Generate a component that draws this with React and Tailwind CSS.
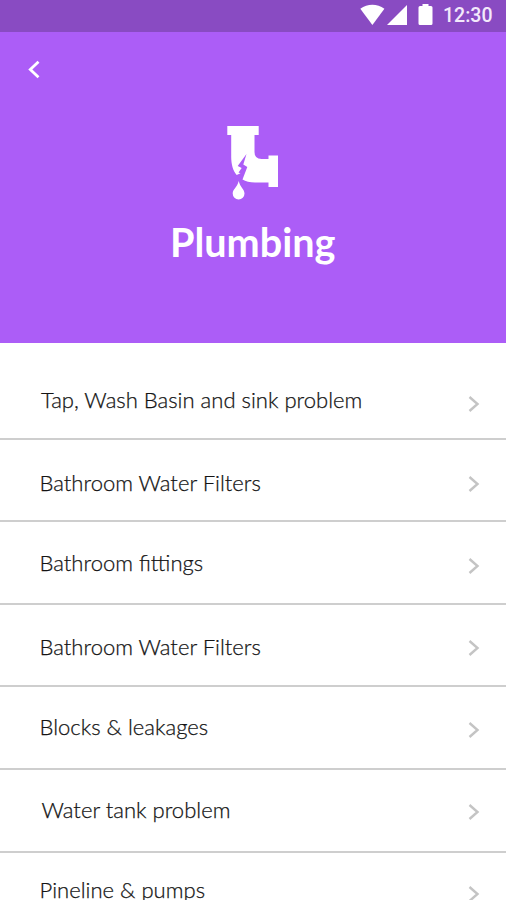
const services = [
  { label: "Tap, Wash Basin and sink problem", row: "h-[97px]", text: "mt-[44px] ml-[41px]", arrow: "mt-[53px]" },
  { label: "Bathroom Water Filters", row: "h-[82px]", text: "mt-[30px] ml-[39.5px]", arrow: "mt-[36px]" },
  { label: "Bathroom fittings", row: "h-[83px]", text: "mt-[28px] ml-[39.5px]", arrow: "mt-[36px]" },
  { label: "Bathroom Water Filters", row: "h-[82px]", text: "mt-[29px] ml-[39.5px]", arrow: "mt-[35px]" },
  { label: "Blocks & leakages", row: "h-[83px]", text: "mt-[27px] ml-[39.5px]", arrow: "mt-[35px]" },
  { label: "Water tank problem", row: "h-[83px]", text: "mt-[27px] ml-[41.5px]", arrow: "mt-[34px]" },
  { label: "Pineline & pumps", row: "h-[83px]", text: "mt-[24px] ml-[39.5px]", arrow: "mt-[33px]" },
]

function StatusBar() {
  return (
    <div className="flex h-8 items-start bg-[#894bc2] pr-[14px] text-white">
      <svg className="mt-1 ml-auto" width="26" height="22" viewBox="0 0 26 22" fill="currentColor">
        <path d="M0.3 4.8C7.5-0.7 17.2-0.7 24.4 4.8L12.4 21Z" />
      </svg>
      <svg className="mt-[5px] ml-px" width="21" height="21" viewBox="0 0 21 21" fill="currentColor">
        <path d="M20 0V20H0Z" />
      </svg>
      <svg className="mt-1 ml-[10px]" width="15" height="22" viewBox="0 0 15 22" fill="currentColor">
        <path d="M4.5 0H10.5V2H13Q14.5 2 14.5 3.5V19.5Q14.5 21 13 21H2Q0.5 21 0.5 19.5V3.5Q0.5 2 2 2H4.5Z" />
      </svg>
      <span className="mt-[4px] ml-[10px] w-[49px] whitespace-nowrap font-['Roboto',sans-serif] text-[19.5px] leading-6 font-medium text-[#f3e9fb]">
        12:30
      </span>
    </div>
  )
}

function PipeIcon() {
  return (
    <svg width="52" height="75" viewBox="0 0 52 75" fill="white">
      <path d="M0.3 0H31.7V9H27.5V26Q27.5 33 34.5 33H41.5V29.5H51V61H41.5V56.5H28C23 56.5 18.5 55.5 15.5 53.5L20.3 41L16.3 38.5L19.5 28L10.7 40L14.7 42L11.5 46.5L13.5 47.3L9.7 49C6 45 4.2 38 4.2 31V9H0.3Z" />
      <path d="M11.7 55C13 61 17.5 63.3 17.5 67.5A5.9 5.9 0 0 1 5.7 67.5C5.7 63.3 10.4 61 11.7 55Z" />
    </svg>
  )
}

function App() {
  return (
    <div className="h-[900px] w-[506px] overflow-hidden bg-white font-['Lato',sans-serif]">
      <StatusBar />

      <header className="flex h-[311px] flex-col bg-[#ac5df7]">
        <button className="mt-7 ml-7 h-[19px] w-3" aria-label="Back">
          <svg width="12" height="19" viewBox="0 0 12 19" fill="none" stroke="white" strokeWidth="2.8">
            <path d="M10.5 1.8L2.3 9.5L10.5 17.2" />
          </svg>
        </button>
        <div className="mt-[47px] ml-[227px]">
          <PipeIcon />
        </div>
        <h1 className="mt-4 ml-[170px] text-[39.6px] leading-[50px] font-bold text-white">Plumbing</h1>
      </header>

      <ul>
        {services.map((service, i) => (
          <li key={i} className={`flex items-start border-b-2 border-[#cecece] pr-[26px] ${service.row}`}>
            <span
              className={`text-[22.05px] leading-[26px] font-light whitespace-nowrap text-[#141414] [-webkit-text-stroke:0.25px_#141414] ${service.text}`}
            >
              {service.label}
            </span>
            <svg
              className={`ml-auto ${service.arrow}`}
              width="12"
              height="16"
              viewBox="0 0 12 16"
              fill="none"
              stroke="#c4c4c4"
              strokeWidth="2.4"
            >
              <path d="M1.5 1L9.5 8L1.5 15" />
            </svg>
          </li>
        ))}
      </ul>
    </div>
  )
}

export default App
